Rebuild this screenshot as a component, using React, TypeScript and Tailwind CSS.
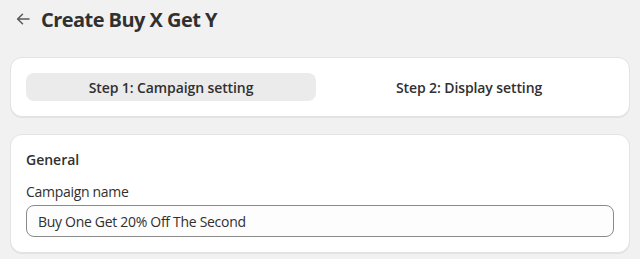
import React from "react";

export default function App() {
  return (
    <div className="min-h-[259px] w-[640px] bg-[#f1f1f1] text-[#303030]" style={{ fontFamily: "'Open Sans', 'Noto Sans', sans-serif" }}>
      <div className="flex items-center gap-[11px] pl-[16px] h-[40px]">
        <svg width="14" height="14" viewBox="0 0 14 14" className="text-[#5a5a5a] -mt-[2px]">
          <path d="M13 7H1.8M6.5 2.2L1.6 7l4.9 4.8" fill="none" stroke="currentColor" strokeWidth="1.5" strokeLinecap="round" strokeLinejoin="round" />
        </svg>
        <h1 className="text-[20px] font-bold leading-[24px] text-[#303030] tracking-[-0.55px]">Create Buy X Get Y</h1>
      </div>
      <div className="px-[10px] pt-[17px] flex flex-col gap-[17px]">
        <div className="bg-white rounded-[12px] border border-[#e3e3e3] shadow-[0_1px_0_0_rgba(26,26,26,0.07)] p-[15px] flex gap-[8px]">
          <div className="flex-1 h-[28px] rounded-[8px] bg-[#ebebeb] flex items-center justify-center text-[14px] font-semibold tracking-[-0.1px]">
            Step 1: Campaign setting
          </div>
          <div className="flex-1 h-[28px] rounded-[8px] flex items-center justify-center text-[14px] font-semibold tracking-[-0.1px]">
            Step 2: Display setting
          </div>
        </div>
        <div className="bg-white rounded-[12px] border border-[#e3e3e3] shadow-[0_1px_0_0_rgba(26,26,26,0.07)] px-[15px] pt-[15px] pb-[15px]">
          <div className="text-[14px] font-semibold leading-[20px]">General</div>
          <div className="mt-[12px] text-[14px] leading-[20px] tracking-[-0.3px]">Campaign name</div>
          <div className="mt-[3px] h-[32px] rounded-[8px] border border-[#8a8a8a] bg-[#fdfdfd] flex items-center px-[11px] text-[14px] tracking-[-0.3px]">
            Buy One Get 20% Off The Second
          </div>
        </div>
      </div>
    </div>
  );
}
